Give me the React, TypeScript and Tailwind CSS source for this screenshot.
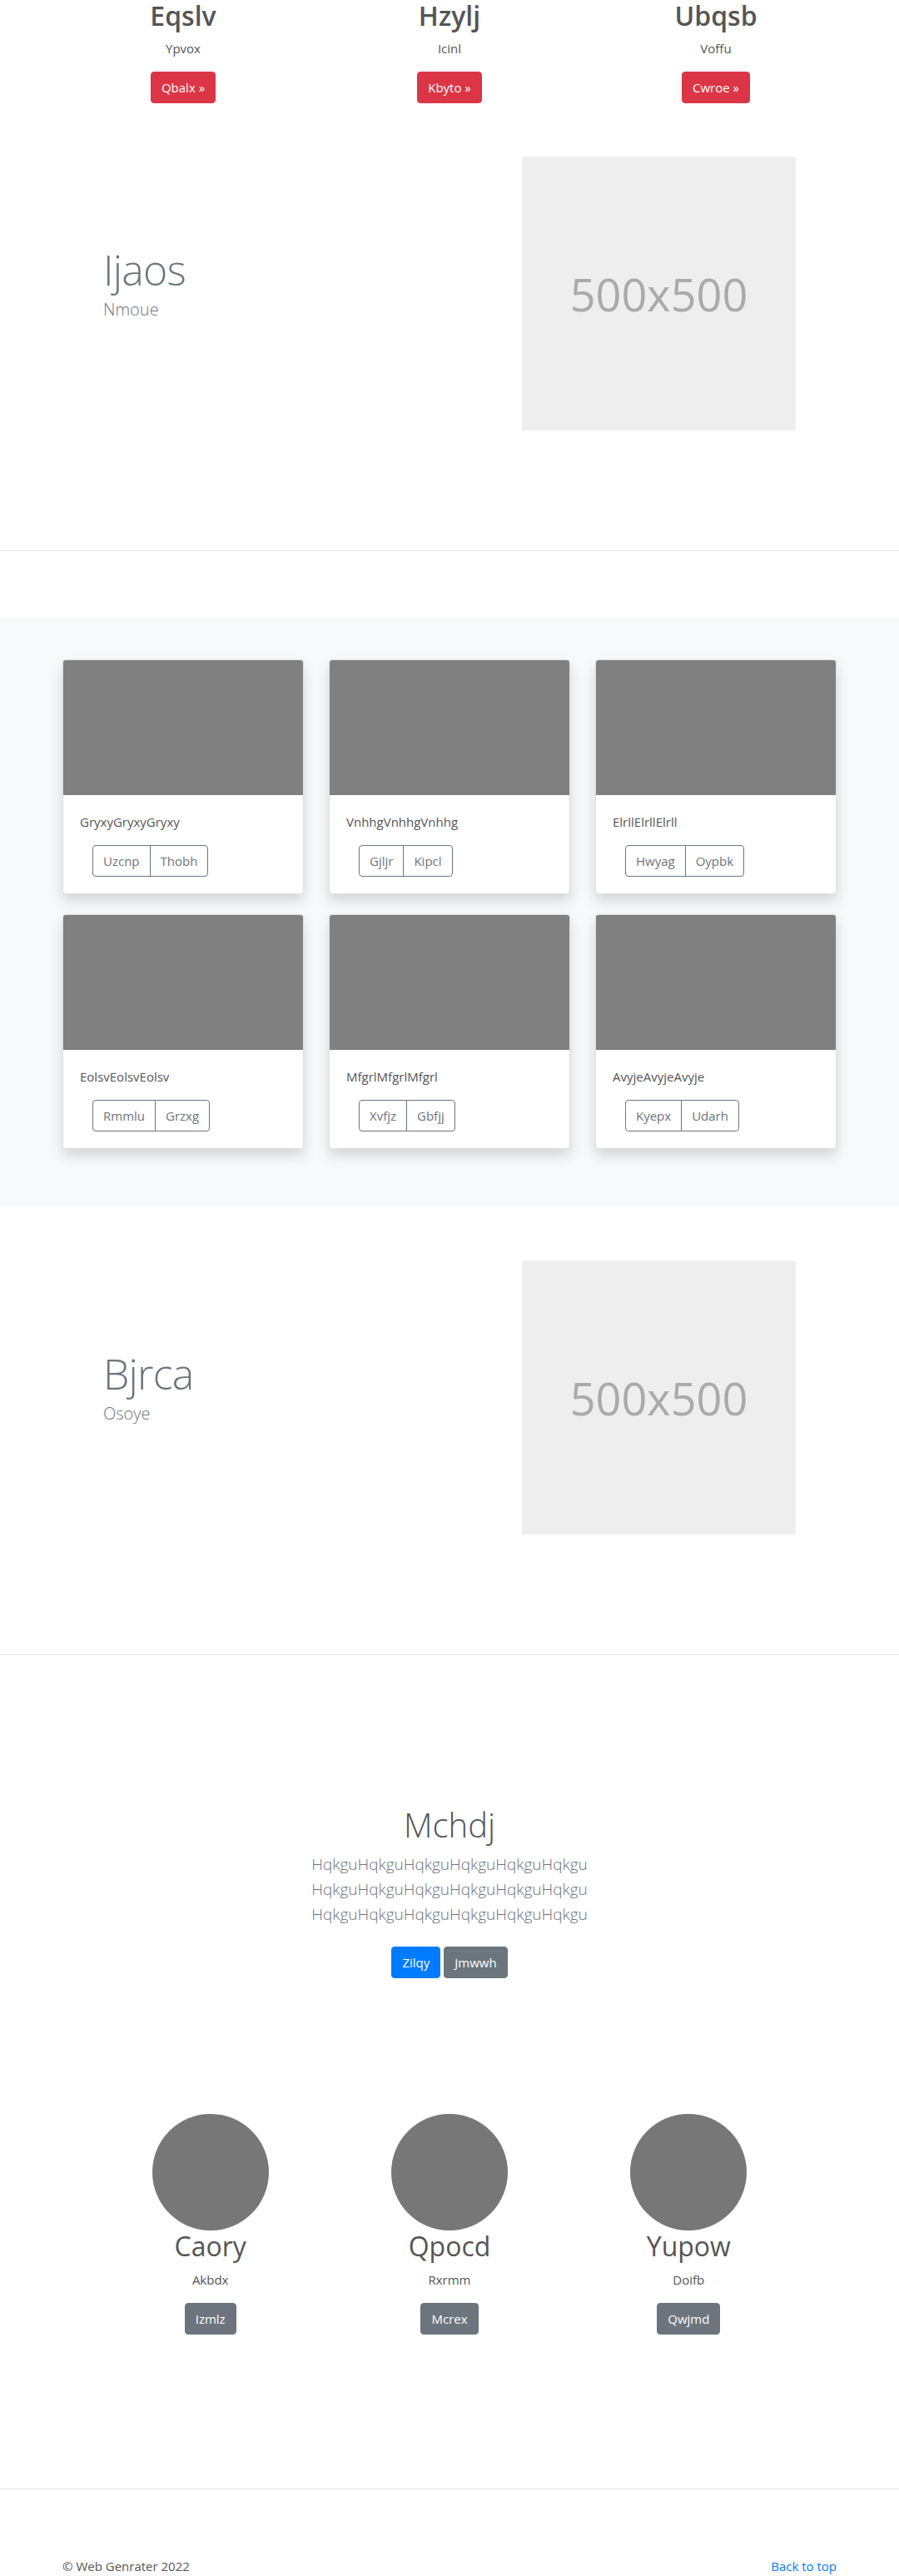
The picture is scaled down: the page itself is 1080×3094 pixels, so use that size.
const TOP_COLS = [
  { title: "Eqslv", sub: "Ypvox", cta: "Qbalx »" },
  { title: "Hzylj", sub: "Icinl", cta: "Kbyto »" },
  { title: "Ubqsb", sub: "Voffu", cta: "Cwroe »" },
];

const CARDS = [
  { text: "GryxyGryxyGryxy", a: "Uzcnp", b: "Thobh" },
  { text: "VnhhgVnhhgVnhhg", a: "Gjljr", b: "Kipcl" },
  { text: "ElrllElrllElrll", a: "Hwyag", b: "Oypbk" },
  { text: "EolsvEolsvEolsv", a: "Rmmlu", b: "Grzxg" },
  { text: "MfgrlMfgrlMfgrl", a: "Xvfjz", b: "Gbfjj" },
  { text: "AvyjeAvyjeAvyje", a: "Kyepx", b: "Udarh" },
];

const PEOPLE = [
  { name: "Caory", sub: "Akbdx", cta: "Izmlz" },
  { name: "Qpocd", sub: "Rxrmm", cta: "Mcrex" },
  { name: "Yupow", sub: "Doifb", cta: "Qwjmd" },
];

function Divider({ className }: { className: string }) {
  return <div className={`h-px w-full bg-[#e6e6e6] ${className}`} />;
}

function Featurette({ title, lead, className }: { title: string; lead: string; className: string }) {
  return (
    <div className={`mx-auto flex w-[832px] items-center gap-[30px] ${className}`}>
      <div className="flex-1 -mt-[4px]">
        <h2 className="mb-2 text-[50px] font-light leading-none tracking-[-0.8px] text-[#6c757d]">{title}</h2>
        <p className="mb-4 text-[20px] font-light leading-[30px] text-[#6c757d]">{lead}</p>
      </div>
      <div className="flex h-[329px] w-[329px] items-center justify-center bg-[#eeeeee]">
        <span className="text-[54px] leading-none text-[#aaaaaa]">500x500</span>
      </div>
    </div>
  );
}

export default function App() {
  return (
    <div className="min-h-[3094px] bg-white font-[family-name:'Segoe_UI','Open_Sans',sans-serif] text-base text-[#555]">
      {/* top marketing row */}
      <div className="mx-auto grid w-[960px] grid-cols-3">
        {TOP_COLS.map((c) => (
          <div key={c.title} className="px-[15px] text-center">
            <h2 className="mb-2 text-[32px] font-semibold leading-[1.2] text-[#555]">{c.title}</h2>
            <p className="mb-4 text-[15px] leading-6">{c.sub}</p>
            <p className="mb-4">
              <a className="inline-block rounded border border-[#dc3545] bg-[#dc3545] px-3 py-1.5 text-[15px] leading-6 text-white">
                {c.cta}
              </a>
            </p>
          </div>
        ))}
      </div>

      <Featurette title="Ijaos" lead="Nmoue" className="mt-12 pb-16" />
      <Divider className="mt-20" />

      {/* album */}
      <section className="mt-20 bg-[#f8f9fa] pt-[50px] pb-[46px]">
        <div className="mx-auto grid w-[960px] grid-cols-3">
          {CARDS.map((c) => (
            <div key={c.text} className="mb-6 px-[15px]">
              <div className="overflow-hidden rounded border border-black/[0.125] bg-white shadow-[0_8px_16px_rgba(0,0,0,0.15)]">
                <div className="h-[162px] bg-[#808080]" />
                <div className="p-5">
                  <p className="mb-4 text-[15px] leading-6 text-[#555]">{c.text}</p>
                  <div className="ml-[15px] inline-flex">
                    <span className="rounded-l border border-[#6c757d] px-3 py-1.5 text-[15px] leading-6 text-[#6c757d]">{c.a}</span>
                    <span className="-ml-px rounded-r border border-[#6c757d] px-3 py-1.5 text-[15px] leading-6 text-[#6c757d]">{c.b}</span>
                  </div>
                </div>
              </div>
            </div>
          ))}
        </div>
      </section>

      <Featurette title="Bjrca" lead="Osoye" className="pt-16 pb-16" />
      <Divider className="mt-20" />

      {/* jumbotron */}
      <section className="pt-[180px] text-center">
        <h1 className="mb-2 text-[40px] font-light leading-[1.2] text-[#555]">Mchdj</h1>
        <p className="mb-4 text-[19px] font-light leading-[30px] text-[#6c757d]">
          <span className="block">HqkguHqkguHqkguHqkguHqkguHqkgu</span>
          <span className="block">HqkguHqkguHqkguHqkguHqkguHqkgu</span>
          <span className="block">HqkguHqkguHqkguHqkguHqkguHqkgu</span>
        </p>
        <p className="mb-4 flex justify-center gap-1">
          <a className="my-2 inline-block rounded border border-[#007bff] bg-[#007bff] px-3 py-1.5 text-[15px] leading-6 text-white">Zilqy</a>
          <a className="my-2 inline-block rounded border border-[#6c757d] bg-[#6c757d] px-3 py-1.5 text-[15px] leading-6 text-white">Jmwwh</a>
        </p>
      </section>

      {/* people */}
      <div className="mx-auto mt-[155px] grid w-[862px] grid-cols-3">
        {PEOPLE.map((p) => (
          <div key={p.name} className="text-center">
            <div className="mx-auto h-[140px] w-[140px] rounded-full bg-[#777]" />
            <h2 className="mb-2 text-[32px] font-normal leading-[1.2] text-[#555]">{p.name}</h2>
            <p className="mb-4 text-[15px] leading-6">{p.sub}</p>
            <p>
              <a className="inline-block rounded border border-[#6c757d] bg-[#6c757d] px-3 py-1.5 text-[15px] leading-6 text-white">{p.cta}</a>
            </p>
          </div>
        ))}
      </div>

      <Divider className="mt-[185px]" />

      <footer className="mx-auto flex w-[960px] justify-between px-[15px] pt-20 pb-12">
        <p className="text-[15px] leading-6 text-[#555]">© Web Genrater 2022</p>
        <a className="text-[15px] leading-6 text-[#007bff]">Back to top</a>
      </footer>
    </div>
  );
}
